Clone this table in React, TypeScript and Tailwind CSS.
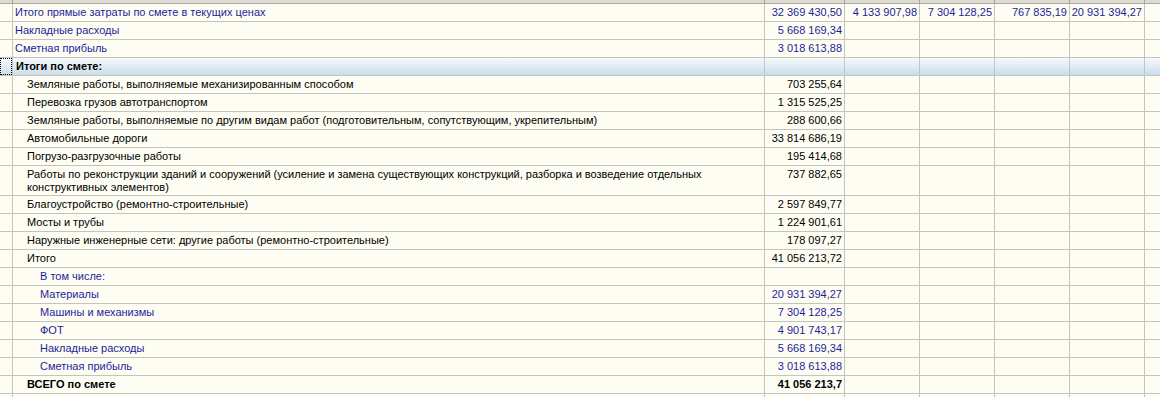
import React from 'react';

type Row = {
  label: string;
  level: 0 | 1 | 2;
  blue?: boolean;
  bold?: boolean;
  group?: boolean;
  tall?: boolean;
  values?: string[];
};

const rows: Row[] = [
  { label: 'Итого прямые затраты по смете в текущих ценах', level: 0, blue: true, values: ['32 369 430,50', '4 133 907,98', '7 304 128,25', '767 835,19', '20 931 394,27'] },
  { label: 'Накладные расходы', level: 0, blue: true, values: ['5 668 169,34'] },
  { label: 'Сметная прибыль', level: 0, blue: true, values: ['3 018 613,88'] },
  { label: 'Итоги по смете:', level: 0, bold: true, group: true },
  { label: 'Земляные работы, выполняемые механизированным способом', level: 1, values: ['703 255,64'] },
  { label: 'Перевозка грузов автотранспортом', level: 1, values: ['1 315 525,25'] },
  { label: 'Земляные работы, выполняемые по другим видам работ (подготовительным, сопутствующим, укрепительным)', level: 1, values: ['288 600,66'] },
  { label: 'Автомобильные дороги', level: 1, values: ['33 814 686,19'] },
  { label: 'Погрузо-разгрузочные работы', level: 1, values: ['195 414,68'] },
  { label: 'Работы по реконструкции зданий и сооружений (усиление и замена существующих конструкций, разборка и возведение отдельных конструктивных элементов)', level: 1, tall: true, values: ['737 882,65'] },
  { label: 'Благоустройство (ремонтно-строительные)', level: 1, values: ['2 597 849,77'] },
  { label: 'Мосты и трубы', level: 1, values: ['1 224 901,61'] },
  { label: 'Наружные инженерные сети: другие работы (ремонтно-строительные)', level: 1, values: ['178 097,27'] },
  { label: 'Итого', level: 1, values: ['41 056 213,72'] },
  { label: 'В том числе:', level: 2, blue: true },
  { label: 'Материалы', level: 2, blue: true, values: ['20 931 394,27'] },
  { label: 'Машины и механизмы', level: 2, blue: true, values: ['7 304 128,25'] },
  { label: 'ФОТ', level: 2, blue: true, values: ['4 901 743,17'] },
  { label: 'Накладные расходы', level: 2, blue: true, values: ['5 668 169,34'] },
  { label: 'Сметная прибыль', level: 2, blue: true, values: ['3 018 613,88'] },
  { label: 'ВСЕГО по смете', level: 1, bold: true, values: ['41 056 213,7'] },
];

const indent = ['pl-[2px]', 'pl-[14px]', 'pl-[27px]'];
const numCols = ['w-[80px]', 'w-[75px]', 'w-[75px]', 'w-[75px]', 'w-[75px]'];

function GridRow({ row }: { row: Row }) {
  const height = row.tall ? 'h-[30px]' : 'h-[18px]';
  const color = row.blue ? 'text-[#1e1e9a]' : 'text-black';
  const weight = row.bold ? 'font-bold' : '';
  const bg = row.group ? 'bg-gradient-to-b from-[#f7fafc] to-[#c6dce9]' : '';
  return (
    <div className={`flex ${height} ${bg} ${color} ${weight}`}>
      <div className="w-[13px] shrink-0 border-r border-b border-[#c4c3bc] relative">
        {row.group && <div className="absolute inset-0 border border-dotted border-black" />}
      </div>
      <div className={`w-[752px] shrink-0 border-r border-b border-[#c4c3bc] ${indent[row.level]} ${row.bold && row.level === 0 ? 'pl-[3px]' : ''} pt-[2px] leading-[13px] pr-[40px]`}>
        {row.label}
      </div>
      {numCols.map((w, i) => (
        <div
          key={i}
          className={`${w} shrink-0 border-r border-b border-[#c4c3bc] pr-[2px] pt-[2px] leading-[13px] text-right whitespace-nowrap`}
        >
          {row.values?.[i] ?? ''}
        </div>
      ))}
      <div className="flex-1 border-b border-[#c4c3bc]" />
    </div>
  );
}

export default function App() {
  return (
    <div className="w-[1160px] h-[397px] overflow-hidden bg-[#fdfdf3] text-[11px] font-['Liberation_Sans',Arial,sans-serif]">
      {/* header strip */}
      <div className="flex h-[4px] bg-[#dcdad2] border-b border-[#a9a8a0]">
        <div className="w-[13px] border-r border-[#a9a8a0]" />
        <div className="w-[752px] border-r border-[#a9a8a0]" />
        {numCols.map((w, i) => (
          <div key={i} className={`${w} border-r border-[#a9a8a0]`} />
        ))}
      </div>
      {rows.map((r, i) => (
        <GridRow key={i} row={r} />
      ))}
      <GridRow row={{ label: '', level: 0 }} />
    </div>
  );
}
